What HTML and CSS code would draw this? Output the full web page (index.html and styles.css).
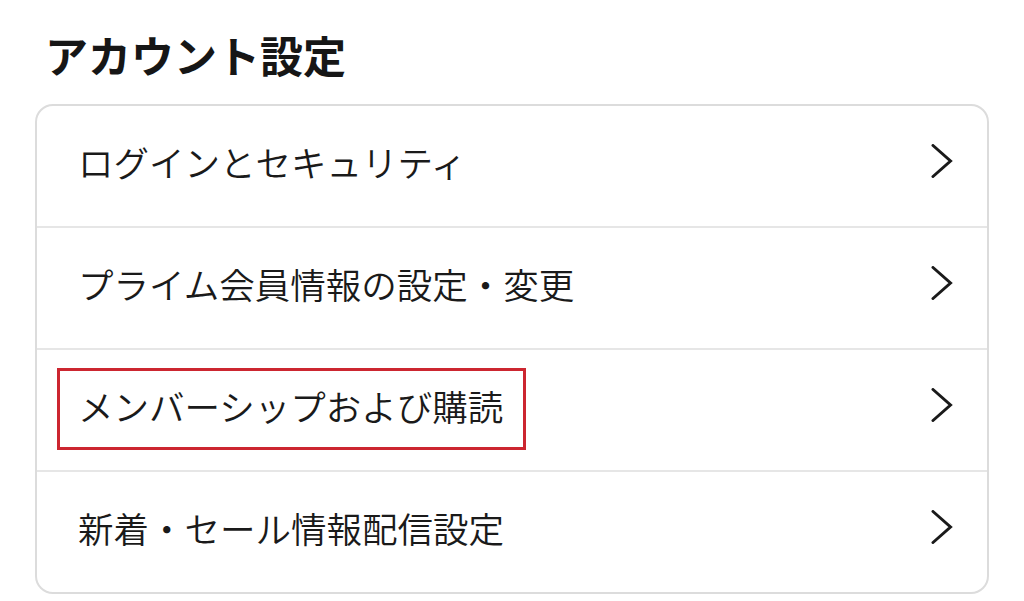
FILE: index.html
```html
<!DOCTYPE html>
<html lang="ja">
<head>
<meta charset="utf-8">
<link rel="stylesheet" href="styles.css">
</head>
<body>
<div class="page">
  <h1 class="title">アカウント設定</h1>
  <div class="card">
    <div class="row"><span class="label">ログインとセキュリティ</span><svg class="chev" viewBox="0 0 22 34" width="22" height="34"><polyline points="2,1.5 19.5,17 2,32.5"/></svg></div>
    <div class="row"><span class="label">プライム会員情報の設定・変更</span><svg class="chev" viewBox="0 0 22 34" width="22" height="34"><polyline points="2,1.5 19.5,17 2,32.5"/></svg></div>
    <div class="row"><span class="label">メンバーシップおよび購読</span><svg class="chev" viewBox="0 0 22 34" width="22" height="34"><polyline points="2,1.5 19.5,17 2,32.5"/></svg><div class="highlight"></div></div>
    <div class="row"><span class="label">新着・セール情報配信設定</span><svg class="chev" viewBox="0 0 22 34" width="22" height="34"><polyline points="2,1.5 19.5,17 2,32.5"/></svg></div>
  </div>
</div>
</body>
</html>
```

FILE: styles.css
```css
html, body {
  margin: 0;
  padding: 0;
  background: #ffffff;
}
body {
  font-family: "Noto Sans CJK JP", "Noto Sans", sans-serif;
  color: #1a1a1a;
  width: 1024px;
  height: 601px;
  overflow: hidden;
}
.page {
  padding: 28px 35px 0 35px;
}
.title {
  margin: 0 0 0 10px;
  font-size: 43px;
  font-weight: 700;
  line-height: 52px;
  height: 52px;
  letter-spacing: 0;
  color: #161616;
}
.card {
  margin-top: 24px;
  width: 950px;
  border: 2px solid #dcdcdc;
  border-radius: 18px;
  box-sizing: content-box;
}
.row {
  position: relative;
  height: 120px;
  display: flex;
  align-items: center;
  justify-content: space-between;
  padding: 0 34px 0 41px;
  border-top: 2px solid #e6e6e6;
}
.row:first-child {
  border-top: none;
  height: 120px;
}
.label {
  font-size: 35.5px;
  font-weight: 350;
  line-height: 1;
  margin-bottom: 9px;
  color: #1a1a1a;
}
.chev {
  display: block;
  fill: none;
  stroke: #1a1a1a;
  stroke-width: 3;
  stroke-linecap: round;
  stroke-linejoin: miter;
  margin-bottom: 10px;
}
.highlight {
  position: absolute;
  left: 20px;
  top: 18px;
  width: 463px;
  height: 76px;
  border: 3px solid #cc2630;
}
```
